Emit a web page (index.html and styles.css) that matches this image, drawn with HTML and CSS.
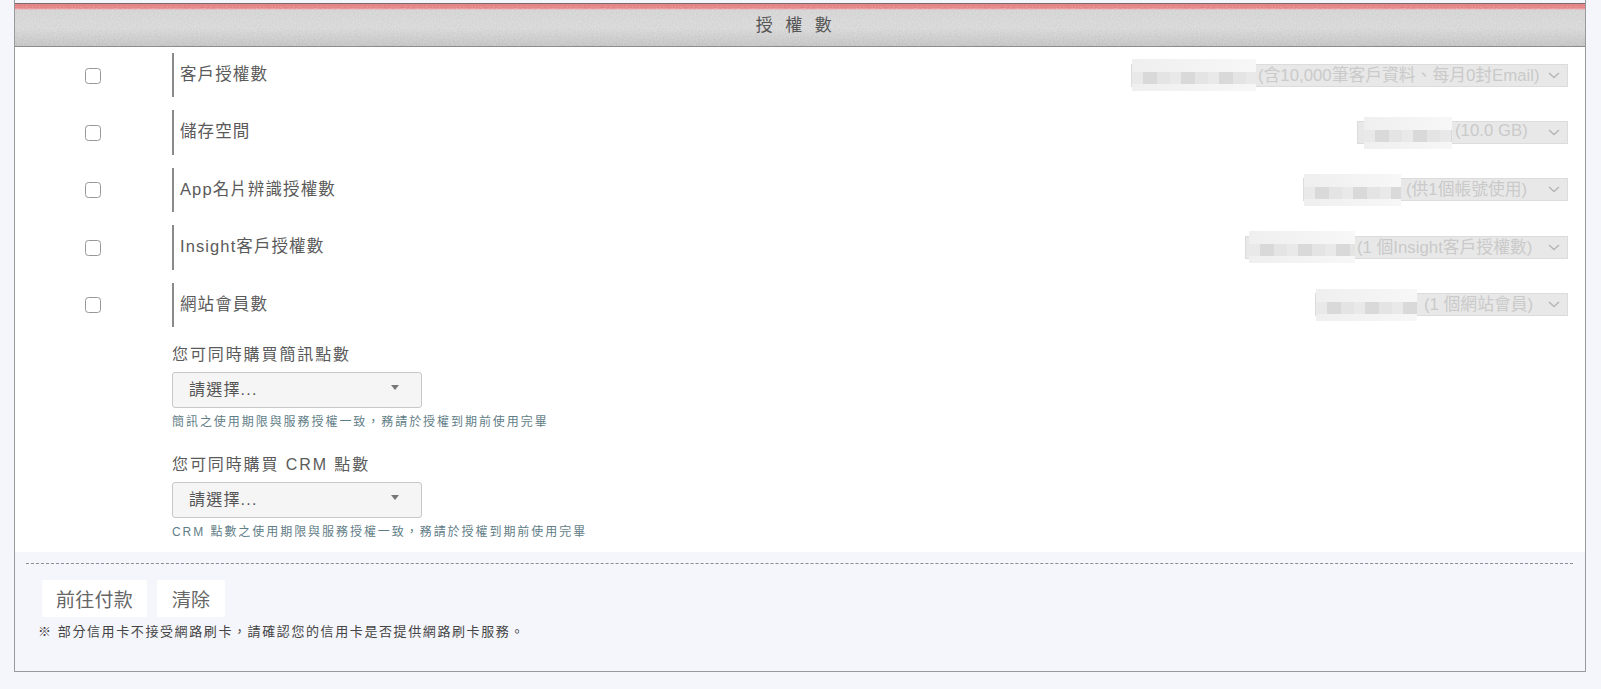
FILE: index.html
```html
<!DOCTYPE html>
<html lang="zh-Hant">
<head>
    <meta charset="UTF-8" />
    <meta name="viewport" content="width=device-width, initial-scale=1.0" />
    <title>授權數</title>
    <link rel="stylesheet" href="styles.css">
</head>
<body>
    <div class="panel">
        <div class="panel-title">授權數</div>

        <div class="panel-body">
            <div class="license-row">
                <div class="check-cell"><span class="checkbox"></span></div>
                <div class="license-name">客戶授權數</div>
                <div class="plan-select plan-a">
                    <span class="mask mask-a"></span>
                    <span class="plan-value">(含10,000筆客戶資料、每月0封Email)</span>
                    <svg class="chevron" viewBox="0 0 12 7"><path d="M1 1l5 4.5L11 1" /></svg>
                </div>
            </div>
            <div class="license-row">
                <div class="check-cell"><span class="checkbox"></span></div>
                <div class="license-name">儲存空間</div>
                <div class="plan-select plan-b">
                    <span class="mask mask-b"></span>
                    <span class="plan-value">(10.0 GB)</span>
                    <svg class="chevron" viewBox="0 0 12 7"><path d="M1 1l5 4.5L11 1" /></svg>
                </div>
            </div>
            <div class="license-row">
                <div class="check-cell"><span class="checkbox"></span></div>
                <div class="license-name">App名片辨識授權數</div>
                <div class="plan-select plan-c">
                    <span class="mask mask-c"></span>
                    <span class="plan-value">(供1個帳號使用)</span>
                    <svg class="chevron" viewBox="0 0 12 7"><path d="M1 1l5 4.5L11 1" /></svg>
                </div>
            </div>
            <div class="license-row">
                <div class="check-cell"><span class="checkbox"></span></div>
                <div class="license-name">Insight客戶授權數</div>
                <div class="plan-select plan-d">
                    <span class="mask mask-d"></span>
                    <span class="plan-value">(1 個Insight客戶授權數)</span>
                    <svg class="chevron" viewBox="0 0 12 7"><path d="M1 1l5 4.5L11 1" /></svg>
                </div>
            </div>
            <div class="license-row">
                <div class="check-cell"><span class="checkbox"></span></div>
                <div class="license-name">網站會員數</div>
                <div class="plan-select plan-e">
                    <span class="mask mask-e"></span>
                    <span class="plan-value">(1 個網站會員)</span>
                    <svg class="chevron" viewBox="0 0 12 7"><path d="M1 1l5 4.5L11 1" /></svg>
                </div>
            </div>

            <div class="points">
                <div class="points-group">
                    <div class="points-label">您可同時購買簡訊點數</div>
                    <div class="points-select">
                        <span>請選擇...</span>
                        <span class="caret"></span>
                    </div>
                    <div class="points-help">簡訊之使用期限與服務授權一致，務請於授權到期前使用完畢</div>
                </div>
                <div class="points-group">
                    <div class="points-label">您可同時購買 CRM 點數</div>
                    <div class="points-select">
                        <span>請選擇...</span>
                        <span class="caret"></span>
                    </div>
                    <div class="points-help">CRM 點數之使用期限與服務授權一致，務請於授權到期前使用完畢</div>
                </div>
            </div>
        </div>

        <div class="panel-footer">
            <div class="footer-line"></div>
            <div class="button-group">
                <button class="btn btn-pay">前往付款</button>
                <button class="btn btn-clear">清除</button>
            </div>
            <p class="footer-note">※ 部分信用卡不接受網路刷卡，請確認您的信用卡是否提供網路刷卡服務。</p>
        </div>
    </div>
</body>
</html>
```

FILE: styles.css
```css
* {
    margin: 0;
    padding: 0;
    box-sizing: border-box;
}

body {
    height: 689px;
    overflow: hidden;
    padding: 0 15px 0 14px;
    background-color: #f5f6fb;
    font-family: "Liberation Sans", "Noto Sans CJK TC", sans-serif;
    color: #555;
}

.panel {
    height: 672px;
    padding-top: 3px;
    border: 1px solid #97999c;
    border-top: none;
}

.panel-title {
    height: 44px;
    border-top: 1px solid #7a6a6a;
    border-bottom: 1px solid #8c8c8c;
    background-image:
        url("data:image/svg+xml,%3Csvg xmlns='http://www.w3.org/2000/svg' width='200' height='44'%3E%3Cfilter id='n'%3E%3CfeTurbulence type='fractalNoise' baseFrequency='.7' numOctaves='2'/%3E%3CfeColorMatrix values='0 0 0 0 1 0 0 0 0 1 0 0 0 0 1 0 0 0 .45 -.1'/%3E%3C/filter%3E%3Crect y='6' width='200' height='38' filter='url(%23n)'/%3E%3C/svg%3E"),
        linear-gradient(to bottom, #e58a8c 0, #df7478 4px, #f0a0a2 5px, #d0d0d0 6px, #d4d4d4 24px, #bebebe 42px);
    padding-top: 4px;
    line-height: 36px;
    text-align: center;
    font-size: 17px;
    letter-spacing: 12.5px;
    color: #555;
}

.panel-body {
    height: 505px;
    padding-top: 6px;
    background-color: #fff;
}

.license-row {
    display: flex;
    align-items: center;
    height: 44.4px;
    margin-bottom: 13px;
    padding-right: 17px;
}

.check-cell {
    width: 157px;
    padding-left: 70px;
}

.checkbox {
    display: block;
    width: 16px;
    height: 16px;
    margin-top: 1px;
    border: 1.5px solid #979797;
    border-radius: 3.5px;
    background-color: #fff;
}

.license-name {
    height: 100%;
    padding-left: 6px;
    border-left: 2px solid #8a8a8a;
    line-height: 42px;
    font-size: 16.5px;
    letter-spacing: 1.1px;
    color: #5a5a5a;
}

.plan-select {
    display: flex;
    align-items: center;
    height: 23px;
    margin-left: auto;
    background-color: #e8e8e8;
    border: 1px solid #dcdcdc;
    font-size: 16.8px;
    color: #cacaca;
}

.plan-a { width: 437px; }
.plan-b { width: 211px; padding-left: 6px; }
.plan-c { width: 265px; }
.plan-d { width: 323px; padding-left: 3px; }
.plan-e { width: 253px; }

/* blurred out part of the option text */
.mask {
    flex-shrink: 0;
    height: 32px;
    background-color: #f6f6f6;
    background-image:
        repeating-linear-gradient(90deg, #e9e9e9 0, #e9e9e9 11px, #d9d9d9 11px, #d9d9d9 25px, #e4e4e4 25px, #e4e4e4 38px),
        linear-gradient(90deg, #efefef, #f7f7f7);
    background-size: 100% 12px, 100% 100%;
    background-position: 0 13px, 0 0;
    background-repeat: no-repeat;
    filter: blur(0.5px);
}

.mask-a { width: 124px; margin-right: 2px; }
.mask-b { width: 88px; margin-right: 3px; }
.mask-c { width: 97px; margin-right: 5px; }
.mask-d { width: 106px; margin-right: 2px; }
.mask-e { width: 101px; margin-right: 7px; }

.plan-value {
    margin-top: -3px;
    white-space: nowrap;
}

.chevron {
    flex-shrink: 0;
    width: 12px;
    height: 7px;
    margin-left: auto;
    margin-right: 7px;
    fill: none;
    stroke: #b5b5b5;
    stroke-width: 1.4;
}

.points {
    margin-left: 157px;
    margin-top: 16px;
}

.points-group {
    margin-bottom: 22px;
}

.points-label {
    height: 26px;
    line-height: 24px;
    font-size: 16px;
    letter-spacing: 1.9px;
    color: #5a5a5a;
}

.points-select {
    display: flex;
    align-items: center;
    justify-content: space-between;
    width: 250px;
    height: 36px;
    margin-top: 3px;
    padding: 0 22px 3px 16px;
    background-color: #f5f5f5;
    border: 1px solid #c8c8c8;
    border-radius: 3px;
    font-size: 16px;
    letter-spacing: 1.2px;
    color: #555;
}

.caret {
    width: 0;
    height: 0;
    border-left: 4.5px solid transparent;
    border-right: 4.5px solid transparent;
    border-top: 5px solid #777;
    margin-bottom: 1px;
}

.points-help {
    margin-top: 5px;
    font-size: 12px;
    line-height: 18px;
    letter-spacing: 1.95px;
    color: #5f7d86;
}

.panel-footer {
    padding: 11px 12px 0 11px;
}

.footer-line {
    border-top: 1px dashed #8f8a9a;
}

.button-group {
    display: flex;
    gap: 10px;
    margin-top: 16px;
    padding-left: 16px;
}

.btn {
    height: 37px;
    border: none;
    border-radius: 2px;
    background-color: #fff;
    font-family: inherit;
    font-size: 19px;
    letter-spacing: 0.3px;
    color: #666;
}

.btn-pay { width: 105px; }
.btn-clear { width: 68px; }

.footer-note {
    margin-top: 6px;
    padding-left: 12px;
    font-size: 13px;
    line-height: 18px;
    letter-spacing: 1.6px;
    color: #444;
}
```
